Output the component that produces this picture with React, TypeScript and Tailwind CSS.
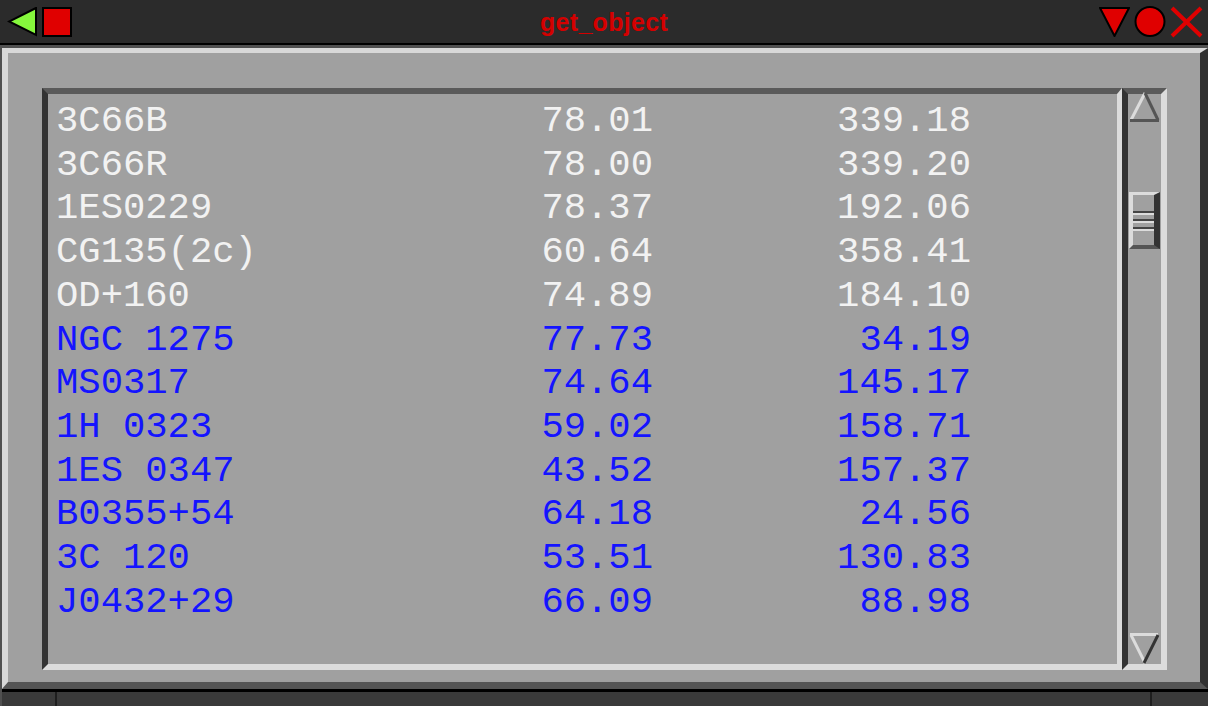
import React from "react";

interface Row {
  name: string,
  a: string,
  b: string,
  blue?: boolean,
}

const rows: Row[] = [
  { name: "3C66B", a: "78.01", b: "339.18" },
  { name: "3C66R", a: "78.00", b: "339.20" },
  { name: "1ES0229", a: "78.37", b: "192.06" },
  { name: "CG135(2c)", a: "60.64", b: "358.41" },
  { name: "OD+160", a: "74.89", b: "184.10" },
  { name: "NGC 1275", a: "77.73", b: "34.19", blue: true },
  { name: "MS0317", a: "74.64", b: "145.17", blue: true },
  { name: "1H 0323", a: "59.02", b: "158.71", blue: true },
  { name: "1ES 0347", a: "43.52", b: "157.37", blue: true },
  { name: "B0355+54", a: "64.18", b: "24.56", blue: true },
  { name: "3C 120", a: "53.51", b: "130.83", blue: true },
  { name: "J0432+29", a: "66.09", b: "88.98", blue: true },
];

function TitleBar() {
  return (
    <div className="h-[45px] bg-[#2b2b2b] border-b-2 border-black grid grid-cols-[1fr_auto_1fr] items-start">
      <div className="flex items-start pt-[7px] pl-[7px] gap-[5px]">
        <svg width="30" height="30" viewBox="0 0 30 30">
          <polygon points="29,1 2,14.5 29,28" fill="#86f83c" stroke="#000" strokeWidth="2" />
        </svg>
        <div className="w-[30px] h-[30px] bg-[#e00000] border-2 border-black" />
      </div>
      <div
        className="text-[25px] font-bold leading-none pt-[10px] text-[#d40000] tracking-[0.3px]"
        style={{ fontFamily: '"Liberation Sans", Arial, sans-serif' }}
      >
        get_object
      </div>
      <div className="flex justify-end items-start pt-[6px] pr-[5px] gap-[4px]">
        <svg width="31" height="31" viewBox="0 0 31 31">
          <polygon points="1,2 30,2 15.5,30" fill="#e00000" stroke="#000" strokeWidth="2" />
        </svg>
        <svg width="32" height="31" viewBox="0 0 32 31">
          <circle cx="16" cy="15.5" r="14.5" fill="#e00000" stroke="#000" strokeWidth="2" />
        </svg>
        <svg width="33" height="32" viewBox="0 0 33 32">
          <line x1="2" y1="2" x2="31" y2="30" stroke="#e00000" strokeWidth="4" />
          <line x1="31" y1="2" x2="2" y2="30" stroke="#e00000" strokeWidth="4" />
        </svg>
      </div>
    </div>
  );
}

function Scrollbar() {
  return (
    <div className="w-[45px] flex flex-col border-t-[6px] border-t-[#5a5a5a] border-l-[6px] border-l-[#333] border-r-[6px] border-r-[#dcdcdc] border-b-[6px] border-b-[#dcdcdc]">
      <svg width="33" height="30" viewBox="0 0 33 30" className="-mt-[2px]">
        <line x1="3" y1="28" x2="17" y2="1" stroke="#dcdcdc" strokeWidth="3" />
        <line x1="17" y1="1" x2="30" y2="28" stroke="#555" strokeWidth="3" />
        <line x1="2" y1="28.5" x2="31" y2="28.5" stroke="#555" strokeWidth="3" />
      </svg>
      <div className="mt-[70px] ml-[1px] w-[31px] h-[57px] flex flex-col gap-[4px] pt-[16px] border-t-[3px] border-t-[#dcdcdc] border-l-[4px] border-l-[#dcdcdc] border-r-[6px] border-r-[#333] border-b-[4px] border-b-[#555]">
        <div className="h-[4px] border-t-2 border-t-[#444] border-b-2 border-b-[#dcdcdc]" />
        <div className="h-[4px] border-t-2 border-t-[#444] border-b-2 border-b-[#dcdcdc]" />
        <div className="h-[4px] border-t-2 border-t-[#444] border-b-2 border-b-[#dcdcdc]" />
      </div>
      <div className="flex-1" />
      <svg width="33" height="31" viewBox="0 0 33 31">
        <line x1="2" y1="1.5" x2="30" y2="1.5" stroke="#dcdcdc" strokeWidth="3" />
        <line x1="3" y1="2" x2="17" y2="30" stroke="#dcdcdc" strokeWidth="3" />
        <line x1="30" y1="2" x2="16" y2="30" stroke="#333" strokeWidth="3" />
      </svg>
    </div>
  );
}

export default function App() {
  return (
    <div className="w-[1208px] h-[706px] flex flex-col bg-[#2b2b2b] overflow-hidden">
      <TitleBar />
      <div className="flex-1 flex flex-col border-t-[3px] border-l-2 border-[#505050]">
        <div className="flex-1 flex bg-[#a0a0a0] border-t-[5px] border-l-[6px] border-t-[#d8d8d8] border-l-[#d8d8d8] border-r-[8px] border-r-[#303030] border-b-[7px] border-b-[#555] pt-[35px] pl-[34px] pr-[33px] pb-[12px]">
          <div className="flex-1 flex">
            <div
              className="flex-1 border-t-[6px] border-t-[#5a5a5a] border-l-[6px] border-l-[#333] border-r-[5px] border-r-[#dcdcdc] border-b-[6px] border-b-[#dcdcdc] pt-[6px] pl-[8px]"
              style={{ fontFamily: '"Liberation Mono", "Courier New", monospace' }}
            >
              {rows.map((r) => (
                <div
                  key={r.name}
                  className={`flex text-[37.2px] leading-[43.7px] whitespace-pre ${r.blue ? "text-[#1414ff]" : "text-[#f2f2f2]"}`}
                >
                  <div className="w-[378px]">{r.name}</div>
                  <div className="w-[219px] text-right">{r.a}</div>
                  <div className="w-[318px] text-right">{r.b}</div>
                </div>
              ))}
            </div>
            <Scrollbar />
          </div>
        </div>
        <div className="h-[3px] bg-black" />
        <div className="h-[14px] flex bg-[#3a3a3a]">
          <div className="w-[55px] border-r-2 border-[#1e1e1e]" />
          <div className="w-[1095px] border-r-2 border-[#1e1e1e]" />
          <div className="flex-1" />
        </div>
      </div>
    </div>
  );
}
